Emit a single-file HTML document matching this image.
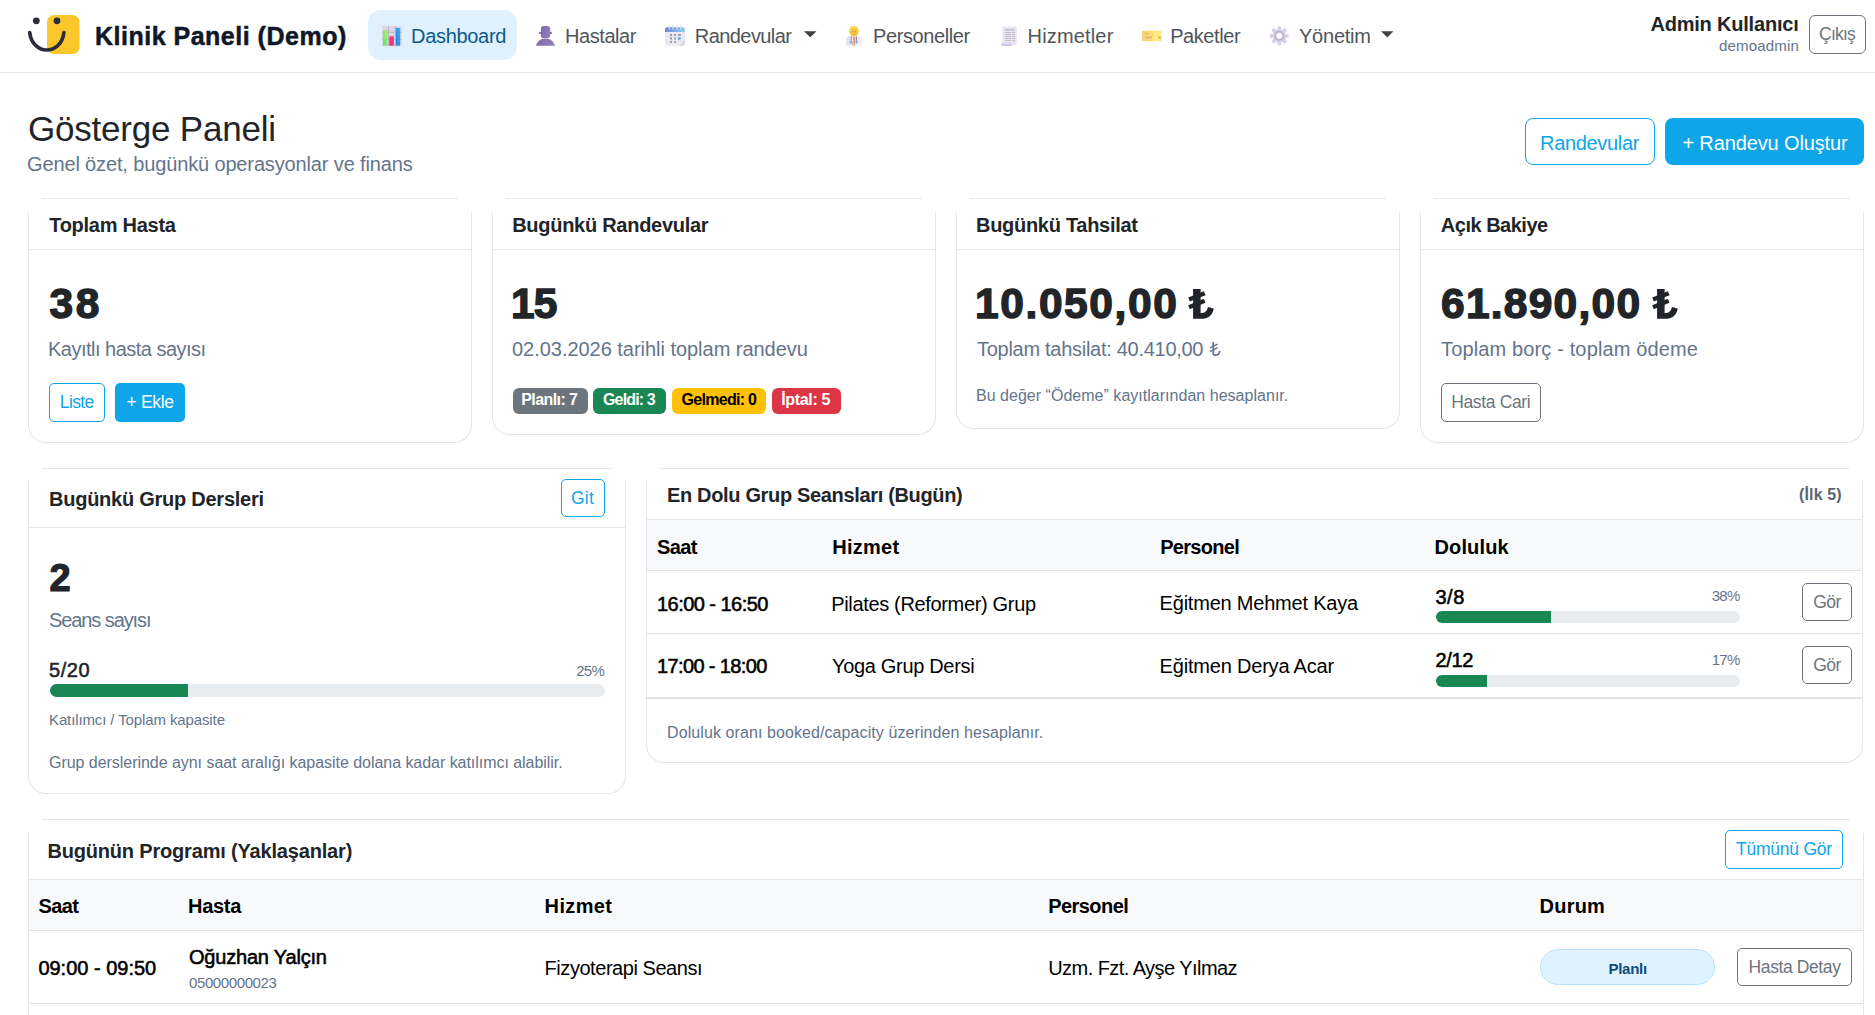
<!DOCTYPE html>
<html><head><meta charset="utf-8"><title>Klinik Paneli</title>
<style>
html,body{margin:0;padding:0;background:#fff;width:1875px;height:1015px;overflow:hidden;position:relative}
body{font-family:"Liberation Sans",sans-serif}
.t{position:absolute;white-space:nowrap;line-height:1}
.b{position:absolute;display:block}
</style></head><body>
<div class="b" style="left:0.0px;top:72.0px;width:1875.0px;height:1.0px;background:#e5e7eb"></div>
<svg class="b" style="left:26px;top:14px" width="56" height="42" viewBox="26 14 56 42"><rect x="47" y="15" width="32.5" height="39" rx="7" fill="#fbc72a"/><circle cx="36.3" cy="20.8" r="3.4" fill="#2e2b3f"/><circle cx="57" cy="20.8" r="3.4" fill="#2e2b3f"/><path d="M29.7 32.5 C31 45 40 50 46.5 50 C54 50 62.5 45 63.9 32.5" fill="none" stroke="#2e2b3f" stroke-width="3.6" stroke-linecap="round"/></svg>
<span id="t0" class="t" style="left:95.0px;top:23.63px;font-size:25px;font-weight:700;color:#0f172a;letter-spacing:0.501px;-webkit-text-stroke:0.5px #0f172a">Klinik Paneli (Demo)</span>
<div class="b" style="left:368.0px;top:10.0px;width:149.0px;height:50.0px;background:#e0f1fd;border-radius:13px"></div>
<span id="t1" class="t" style="left:411.0px;top:25.87px;font-size:20px;font-weight:400;color:#0b5a8b;letter-spacing:-0.306px">Dashboard</span>
<span id="t2" class="t" style="left:565.0px;top:25.87px;font-size:20px;font-weight:400;color:#505559;letter-spacing:-0.429px">Hastalar</span>
<span id="t3" class="t" style="left:694.8px;top:25.87px;font-size:20px;font-weight:400;color:#505559;letter-spacing:-0.570px">Randevular</span>
<span id="t4" class="t" style="left:873.0px;top:25.87px;font-size:20px;font-weight:400;color:#505559;letter-spacing:-0.390px">Personeller</span>
<span id="t5" class="t" style="left:1027.6px;top:25.87px;font-size:20px;font-weight:400;color:#505559;letter-spacing:0.156px">Hizmetler</span>
<span id="t6" class="t" style="left:1170.2px;top:25.87px;font-size:20px;font-weight:400;color:#505559;letter-spacing:-0.429px">Paketler</span>
<span id="t7" class="t" style="left:1299.0px;top:25.87px;font-size:20px;font-weight:400;color:#505559;letter-spacing:-0.233px">Yönetim</span>
<svg class="b" style="left:804px;top:30.5px" width="12.5" height="6.5" viewBox="0 0 12 6"><path d="M0 0 H12 L6 6 Z" fill="#3f4347"/></svg>
<svg class="b" style="left:1380.6px;top:30.5px" width="12.5" height="6.5" viewBox="0 0 12 6"><path d="M0 0 H12 L6 6 Z" fill="#3f4347"/></svg>
<svg class="b" style="left:378px;top:22px" width="28" height="28" viewBox="0 0 28 28"><defs><linearGradient id="gG" x1="0" y1="1" x2="1" y2="0"><stop offset="0" stop-color="#5fdc86"/><stop offset="1" stop-color="#b9f25c"/></linearGradient><linearGradient id="gP" x1="0" y1="1" x2="1" y2="0"><stop offset="0" stop-color="#e1305f"/><stop offset="1" stop-color="#f0449a"/></linearGradient><linearGradient id="gB" x1="0" y1="1" x2="1" y2="0"><stop offset="0" stop-color="#2f7fd8"/><stop offset="1" stop-color="#38b2f8"/></linearGradient></defs><rect x="4.1" y="3.9" width="19.6" height="20.4" rx="1.2" fill="#dcd6e6"/><path d="M10.4 3.9 V24.3 M17.4 3.9 V24.3 M4.1 10.3 H23.7 M4.1 17.4 H23.7" stroke="#a9a2b5" stroke-width="0.7"/><rect x="4.9" y="8.3" width="4.6" height="15.4" fill="url(#gG)"/><rect x="11.3" y="14.3" width="4.6" height="9.4" fill="url(#gP)"/><rect x="17.9" y="5.9" width="4.3" height="17.8" fill="url(#gB)"/></svg>
<svg class="b" style="left:532px;top:22px" width="28" height="28" viewBox="0 0 28 28"><defs><linearGradient id="gU" x1="0" y1="0" x2="1" y2="0"><stop offset="0" stop-color="#7f6aa6"/><stop offset="1" stop-color="#9780bf"/></linearGradient></defs><circle cx="8.3" cy="10.9" r="1.2" fill="#7a64a0"/><circle cx="18.7" cy="10.9" r="1.2" fill="#7a64a0"/><rect x="8.9" y="4.1" width="9.3" height="11.9" rx="2.6" fill="url(#gU)"/><path d="M4.1 23.7 C5.3 19.3 8.6 16.6 13.5 16.6 C18.4 16.6 21.7 19.3 22.9 23.7 Z" fill="url(#gU)"/></svg>
<svg class="b" style="left:662px;top:22px" width="28" height="28" viewBox="0 0 28 28"><defs><linearGradient id="gC" x1="0" y1="0" x2="1" y2="0"><stop offset="0" stop-color="#6a86d6"/><stop offset="1" stop-color="#8fd0f2"/></linearGradient></defs><rect x="3" y="5.2" width="20" height="18.5" rx="2.4" fill="#ece8f3"/><path d="M3 9.9 V7.4 C3 6.1 4.1 5.2 5.4 5.2 H20.6 C21.9 5.2 23 6.1 23 7.4 V9.9 Z" fill="url(#gC)"/><path d="M7.3 3.2 V7.3 M11 3.2 V7.3 M14.8 3.2 V7.3 M18.6 3.2 V7.3" stroke="#dcdce6" stroke-width="1.1" stroke-linecap="round"/><g fill="#a19ca8"><rect x="8" y="12" width="2" height="2"/><rect x="12" y="12" width="2" height="2"/><rect x="16" y="12" width="2.8" height="2"/><rect x="8" y="15.3" width="2" height="2.3"/><rect x="12" y="15.3" width="2" height="2.3"/><rect x="8" y="19" width="2" height="1.8"/><rect x="12" y="19" width="2" height="1.8"/></g><path d="M16 15.2 H18.8 V16.6 C18.8 17.4 18 17.9 16.9 17.9 H16 Z" fill="#6fa9e8"/><path d="M17 23.7 L23 17 V21.5 C23 22.7 22 23.7 20.8 23.7 Z" fill="#ddd8e6"/></svg>
<svg class="b" style="left:840px;top:22px" width="28" height="28" viewBox="0 0 28 28"><defs><linearGradient id="gD" x1="0" y1="0" x2="1" y2="0"><stop offset="0" stop-color="#e3dfed"/><stop offset="1" stop-color="#f1eef7"/></linearGradient></defs><path d="M6.3 23.7 V18 C6.3 15.5 8.5 14.1 11 14.1 H17.4 C19.9 14.1 22.1 15.5 22.1 18 V23.7 Z" fill="url(#gD)"/><path d="M11.3 14.3 V18.5 C11.3 20.7 12.7 21 12.7 21 M10.3 19 C9.6 21.3 11.5 22 12.5 21.2" fill="none" stroke="#7683b8" stroke-width="0.9"/><path d="M16.5 14.3 V19.5" stroke="#7683b8" stroke-width="0.9"/><circle cx="16.5" cy="20.3" r="1.1" fill="#5fa8ec"/><path d="M13.3 15 H15.2 L14.8 23.7 H13.7 Z" fill="#e8874f"/><ellipse cx="14" cy="9" rx="4.9" ry="5.3" fill="#f8dc55"/><ellipse cx="14" cy="10.2" rx="3.7" ry="4" fill="#f6c443"/><circle cx="12.4" cy="9.7" r="0.55" fill="#6d6a73"/><circle cx="15.6" cy="9.7" r="0.55" fill="#6d6a73"/><rect x="13.2" y="11.8" width="1.6" height="0.8" rx="0.4" fill="#d7745f"/></svg>
<svg class="b" style="left:995px;top:22px" width="28" height="28" viewBox="0 0 28 28"><path d="M7.4 5 L8.3 4.3 L9.2 5 L10.1 4.3 L11 5 L11.9 4.3 L12.8 5 L13.7 4.3 L14.6 5 L15.5 4.3 L16.4 5 L17.3 4.3 L18.2 5 L19.1 4.3 L20 5 L20.9 4.3 L21.8 5 V21.5 C21.8 22.4 21.1 23 20.3 23 H7.4 Z" fill="#e9e4ef"/><rect x="10.1" y="7.1" width="9.5" height="1.5" fill="#c3bec9"/><g fill="#bdb8c4"><rect x="10.1" y="10" width="5.8" height="0.9"/><rect x="17.1" y="10" width="2.7" height="0.9"/><rect x="10.1" y="12" width="5.8" height="0.9"/><rect x="17.1" y="12" width="2.7" height="0.9"/><rect x="10.1" y="14" width="5.8" height="0.9"/><rect x="17.1" y="14" width="2.7" height="0.9"/><rect x="10.1" y="16.1" width="5.8" height="0.9"/><rect x="17.1" y="16.1" width="2.7" height="0.9"/><rect x="10.1" y="18.1" width="5.8" height="0.9"/><rect x="17.1" y="18.1" width="2.7" height="0.9"/></g><rect x="6" y="20.7" width="10.8" height="3" rx="1.2" fill="#ddd3ea"/><rect x="7" y="22.8" width="9.8" height="0.9" fill="#c9b5e2"/></svg>
<svg class="b" style="left:1138px;top:22px" width="28" height="28" viewBox="0 0 28 28"><defs><linearGradient id="gT" x1="0" y1="0" x2="1" y2="0"><stop offset="0" stop-color="#f4d26c"/><stop offset="1" stop-color="#fff27c"/></linearGradient></defs><path d="M4.1 8.8 H16.8 C16.8 9.4 17.1 9.7 17.4 9.7 C17.7 9.7 18 9.4 18 8.8 H24 V19 H18 C18 18.4 17.7 18.1 17.4 18.1 C17.1 18.1 16.8 18.4 16.8 19 H4.1 Z" fill="url(#gT)"/><circle cx="17.4" cy="12.1" r="0.8" fill="#fff"/><circle cx="17.4" cy="15.5" r="0.8" fill="#fff"/><rect x="7.2" y="11.1" width="3.6" height="0.9" fill="#e39f6e"/><rect x="7.2" y="14.5" width="6.6" height="2.1" fill="#e6b27a"/><rect x="20.5" y="14.5" width="2.2" height="2.1" rx="0.6" fill="#e59a70"/></svg>
<svg class="b" style="left:1265px;top:22px" width="28" height="28" viewBox="0 0 28 28"><g fill="#d8d0e7"><circle cx="14.30" cy="6.20" r="2.1"/><circle cx="19.67" cy="8.43" r="2.1"/><circle cx="21.90" cy="13.80" r="2.1"/><circle cx="19.67" cy="19.17" r="2.1"/><circle cx="14.30" cy="21.40" r="2.1"/><circle cx="8.93" cy="19.17" r="2.1"/><circle cx="6.70" cy="13.80" r="2.1"/><circle cx="8.93" cy="8.43" r="2.1"/><circle cx="14.3" cy="13.8" r="6.6"/></g><circle cx="14.3" cy="13.8" r="4.2" fill="none" stroke="#bfb4d0" stroke-width="1.8"/><circle cx="14.3" cy="13.8" r="2.8" fill="#fff"/></svg>
<span id="t8" class="t" style="left:1650.4px;top:13.87px;font-size:20px;font-weight:700;color:#212529;letter-spacing:-0.198px">Admin Kullanıcı</span>
<span id="t9" class="t" style="left:1719.0px;top:37.90px;font-size:15px;font-weight:400;color:#64748b;letter-spacing:0.194px">demoadmin</span>
<div class="b" style="left:1809.0px;top:15.0px;width:57.0px;height:39.0px;border:1px solid #6c757d;border-radius:6px;box-sizing:border-box"></div>
<span id="t10" class="t" style="left:1819.0px;top:26.18px;font-size:17.5px;font-weight:400;color:#6c757d;letter-spacing:-0.750px">Çıkış</span>
<span id="t11" class="t" style="left:28.0px;top:111.37px;font-size:35px;font-weight:400;color:#212529;letter-spacing:-0.214px">Gösterge Paneli</span>
<span id="t12" class="t" style="left:27.0px;top:153.57px;font-size:20px;font-weight:400;color:#64748b;letter-spacing:-0.137px">Genel özet, bugünkü operasyonlar ve finans</span>
<div class="b" style="left:1525.0px;top:118.0px;width:130.0px;height:47.0px;border:1px solid #0ea5e9;border-radius:8px;box-sizing:border-box"></div>
<span id="t13" class="t" style="left:1540.0px;top:133.07px;font-size:20px;font-weight:400;color:#0ea5e9;letter-spacing:-0.316px">Randevular</span>
<div class="b" style="left:1665.0px;top:118.0px;width:199.0px;height:47.0px;background:#0ea5e9;border-radius:8px"></div>
<span id="t14" class="t" style="left:1682.4px;top:133.07px;font-size:20px;font-weight:400;color:#ffffff;letter-spacing:-0.129px">+ Randevu Oluştur</span>
<div class="b" style="left:42.0px;top:198.0px;width:416.0px;height:1.0px;background:#e3e6ea"></div>
<div class="b" style="left:28.0px;top:212.0px;width:444.0px;height:231.0px;border:1px solid #e3e6ea;border-top:none;border-radius:0 0 18px 18px;box-sizing:border-box"></div>
<div class="b" style="left:29.0px;top:249.0px;width:442.0px;height:1.0px;background:#e3e6ea"></div>
<div class="b" style="left:506.0px;top:198.0px;width:416.0px;height:1.0px;background:#e3e6ea"></div>
<div class="b" style="left:492.0px;top:212.0px;width:444.0px;height:223.0px;border:1px solid #e3e6ea;border-top:none;border-radius:0 0 18px 18px;box-sizing:border-box"></div>
<div class="b" style="left:493.0px;top:249.0px;width:442.0px;height:1.0px;background:#e3e6ea"></div>
<div class="b" style="left:970.0px;top:198.0px;width:416.0px;height:1.0px;background:#e3e6ea"></div>
<div class="b" style="left:956.0px;top:212.0px;width:444.0px;height:217.0px;border:1px solid #e3e6ea;border-top:none;border-radius:0 0 18px 18px;box-sizing:border-box"></div>
<div class="b" style="left:957.0px;top:249.0px;width:442.0px;height:1.0px;background:#e3e6ea"></div>
<div class="b" style="left:1434.0px;top:198.0px;width:416.0px;height:1.0px;background:#e3e6ea"></div>
<div class="b" style="left:1420.0px;top:212.0px;width:444.0px;height:231.0px;border:1px solid #e3e6ea;border-top:none;border-radius:0 0 18px 18px;box-sizing:border-box"></div>
<div class="b" style="left:1421.0px;top:249.0px;width:442.0px;height:1.0px;background:#e3e6ea"></div>
<span id="t15" class="t" style="left:49.2px;top:215.07px;font-size:20px;font-weight:700;color:#212529;letter-spacing:-0.260px">Toplam Hasta</span>
<span id="t16" class="t" style="left:512.2px;top:215.07px;font-size:20px;font-weight:700;color:#212529;letter-spacing:-0.277px">Bugünkü Randevular</span>
<span id="t17" class="t" style="left:976.0px;top:215.07px;font-size:20px;font-weight:700;color:#212529;letter-spacing:-0.290px">Bugünkü Tahsilat</span>
<span id="t18" class="t" style="left:1440.8px;top:215.07px;font-size:20px;font-weight:700;color:#212529;letter-spacing:-0.490px">Açık Bakiye</span>
<span id="t19" class="t" style="left:49.4px;top:283.02px;font-size:42.5px;font-weight:700;color:#212529;letter-spacing:2.800px;-webkit-text-stroke:1.4px #212529">38</span>
<span id="t20" class="t" style="left:511.0px;top:283.02px;font-size:42.5px;font-weight:700;color:#212529;letter-spacing:-0.900px;-webkit-text-stroke:1.4px #212529">15</span>
<span id="t21" class="t" style="left:975.0px;top:283.02px;font-size:42.5px;font-weight:700;color:#212529;letter-spacing:1.601px;-webkit-text-stroke:1.4px #212529">10.050,00</span>
<svg class="b" style="left:1189.2px;top:288.9px;overflow:visible" width="25.8" height="31.0" viewBox="0 0 60 72"><path d="M9.5 0 H27 V55.5 H31 C37.5 55.5 42.5 51 44 42 L57.5 45.5 C55 60 46 69 32 69 H9.5 Z" fill="#212529"/><path d="M0 24.4 L36.5 9.8 M0 42.3 L36.5 27.4" stroke="#212529" stroke-width="10"/></svg>
<span id="t22" class="t" style="left:1441.0px;top:283.02px;font-size:42.5px;font-weight:700;color:#212529;letter-spacing:1.250px;-webkit-text-stroke:1.4px #212529">61.890,00</span>
<svg class="b" style="left:1653.3px;top:288.9px;overflow:visible" width="25.8" height="31.0" viewBox="0 0 60 72"><path d="M9.5 0 H27 V55.5 H31 C37.5 55.5 42.5 51 44 42 L57.5 45.5 C55 60 46 69 32 69 H9.5 Z" fill="#212529"/><path d="M0 24.4 L36.5 9.8 M0 42.3 L36.5 27.4" stroke="#212529" stroke-width="10"/></svg>
<span id="t23" class="t" style="left:48.0px;top:338.57px;font-size:20px;font-weight:400;color:#64748b;letter-spacing:-0.510px">Kayıtlı hasta sayısı</span>
<span id="t24" class="t" style="left:512.0px;top:338.57px;font-size:20px;font-weight:400;color:#64748b;letter-spacing:-0.031px">02.03.2026 tarihli toplam randevu</span>
<span id="t25" class="t" style="left:977.0px;top:338.57px;font-size:20px;font-weight:400;color:#64748b;letter-spacing:-0.280px">Toplam tahsilat: 40.410,00</span>
<svg class="b" style="left:1209.7px;top:341.5px;overflow:visible" width="12.0" height="14.4" viewBox="0 0 60 72"><path d="M16.5 0 V58 C16.5 64 20 65.8 26 65.8 C40 65.8 47.5 59 48 45" fill="none" stroke="#64748b" stroke-width="8.5"/><path d="M0 30 L38 10.5 M0 48 L38 28.5" stroke="#64748b" stroke-width="7"/></svg>
<span id="t26" class="t" style="left:1441.0px;top:338.57px;font-size:20px;font-weight:400;color:#64748b;letter-spacing:0.140px">Toplam borç - toplam ödeme</span>
<div class="b" style="left:49.0px;top:383.0px;width:56.0px;height:39.0px;border:1px solid #0ea5e9;border-radius:5px;box-sizing:border-box"></div>
<span id="t27" class="t" style="left:59.8px;top:394.18px;font-size:17.5px;font-weight:400;color:#0ea5e9;letter-spacing:-0.625px">Liste</span>
<div class="b" style="left:115.0px;top:383.0px;width:70.0px;height:39.0px;background:#0ea5e9;border-radius:5px"></div>
<span id="t28" class="t" style="left:126.6px;top:394.18px;font-size:17.5px;font-weight:400;color:#ffffff;letter-spacing:-0.340px">+ Ekle</span>
<div class="b" style="left:512.8px;top:388.0px;width:74.8px;height:25.6px;background:#6c757d;border-radius:6px"></div>
<span id="t29" class="t" style="left:521.2px;top:392.35px;font-size:16px;font-weight:700;color:#fff;letter-spacing:-0.575px">Planlı: 7</span>
<div class="b" style="left:593.2px;top:388.0px;width:72.5px;height:25.6px;background:#198754;border-radius:6px"></div>
<span id="t30" class="t" style="left:603.0px;top:392.35px;font-size:16px;font-weight:700;color:#fff;letter-spacing:-0.844px">Geldi: 3</span>
<div class="b" style="left:672.0px;top:388.0px;width:94.4px;height:25.6px;background:#ffc107;border-radius:6px"></div>
<span id="t31" class="t" style="left:681.6px;top:392.35px;font-size:16px;font-weight:700;color:#000;letter-spacing:-0.713px">Gelmedi: 0</span>
<div class="b" style="left:772.0px;top:388.0px;width:68.7px;height:25.6px;background:#dc3545;border-radius:6px"></div>
<span id="t32" class="t" style="left:781.2px;top:392.35px;font-size:16px;font-weight:700;color:#fff;letter-spacing:-0.325px">İptal: 5</span>
<span id="t33" class="t" style="left:976.0px;top:388.45px;font-size:16px;font-weight:400;color:#64748b;letter-spacing:0.024px">Bu değer “Ödeme” kayıtlarından hesaplanır.</span>
<div class="b" style="left:1441.0px;top:383.4px;width:100.0px;height:38.6px;border:1px solid #6c757d;border-radius:5px;box-sizing:border-box"></div>
<span id="t34" class="t" style="left:1451.2px;top:394.18px;font-size:17.5px;font-weight:400;color:#6c757d;letter-spacing:-0.348px">Hasta Cari</span>
<div class="b" style="left:42.0px;top:468.0px;width:570.0px;height:1.0px;background:#e3e6ea"></div>
<div class="b" style="left:28.0px;top:482.0px;width:598.0px;height:312.0px;border:1px solid #e3e6ea;border-top:none;border-radius:0 0 18px 18px;box-sizing:border-box"></div>
<div class="b" style="left:29.0px;top:527.0px;width:596.0px;height:1.0px;background:#e3e6ea"></div>
<span id="t35" class="t" style="left:49.0px;top:489.07px;font-size:20px;font-weight:700;color:#212529;letter-spacing:-0.250px">Bugünkü Grup Dersleri</span>
<div class="b" style="left:561.0px;top:479.0px;width:44.0px;height:38.0px;border:1px solid #0ea5e9;border-radius:5px;box-sizing:border-box"></div>
<span id="t36" class="t" style="left:571.0px;top:490.38px;font-size:17.5px;font-weight:400;color:#0ea5e9;letter-spacing:0.250px">Git</span>
<span id="t37" class="t" style="left:49.5px;top:559.13px;font-size:38px;font-weight:700;color:#212529;letter-spacing:-4.900px;-webkit-text-stroke:1.2px #212529">2</span>
<span id="t38" class="t" style="left:49.0px;top:609.87px;font-size:20px;font-weight:400;color:#64748b;letter-spacing:-1.091px">Seans sayısı</span>
<span id="t39" class="t" style="left:49.0px;top:660.07px;font-size:20px;font-weight:400;color:#212529;letter-spacing:0.533px;-webkit-text-stroke:0.55px #212529">5/20</span>
<span id="t40" class="t" style="left:576.2px;top:662.70px;font-size:15px;font-weight:400;color:#64748b;letter-spacing:-0.700px">25%</span>
<div class="b" style="left:49.5px;top:684.0px;width:555.5px;height:13.0px;background:#e9ecef;border-radius:7px"></div>
<div class="b" style="left:49.5px;top:684.0px;width:138.7px;height:13.0px;background:#198754;border-radius:7px 0 0 7px"></div>
<span id="t41" class="t" style="left:49.0px;top:712.00px;font-size:15px;font-weight:400;color:#64748b;letter-spacing:-0.115px">Katılımcı / Toplam kapasite</span>
<span id="t42" class="t" style="left:49.0px;top:754.65px;font-size:16px;font-weight:400;color:#64748b;letter-spacing:-0.040px">Grup derslerinde aynı saat aralığı kapasite dolana kadar katılımcı alabilir.</span>
<div class="b" style="left:660.0px;top:468.0px;width:1189.0px;height:1.0px;background:#e3e6ea"></div>
<div class="b" style="left:646.0px;top:482.0px;width:1217.0px;height:281.0px;border:1px solid #e3e6ea;border-top:none;border-radius:0 0 18px 18px;box-sizing:border-box"></div>
<div class="b" style="left:647.0px;top:519.0px;width:1215.0px;height:1.0px;background:#e3e6ea"></div>
<span id="t43" class="t" style="left:667.0px;top:485.37px;font-size:20px;font-weight:700;color:#212529;letter-spacing:-0.338px">En Dolu Grup Seansları (Bugün)</span>
<span id="t44" class="t" style="left:1799.0px;top:486.75px;font-size:16px;font-weight:700;color:#5b6472;letter-spacing:0.149px">(İlk 5)</span>
<div class="b" style="left:647.0px;top:520.0px;width:1215.0px;height:50.0px;background:#f8f9fa"></div>
<div class="b" style="left:647.0px;top:570.0px;width:1215.0px;height:1.0px;background:#dee2e6"></div>
<span id="t45" class="t" style="left:657.0px;top:536.67px;font-size:20px;font-weight:700;color:#000;letter-spacing:-0.602px">Saat</span>
<span id="t46" class="t" style="left:832.2px;top:536.67px;font-size:20px;font-weight:700;color:#000;letter-spacing:0.280px">Hizmet</span>
<span id="t47" class="t" style="left:1160.2px;top:536.67px;font-size:20px;font-weight:700;color:#000;letter-spacing:-0.688px">Personel</span>
<span id="t48" class="t" style="left:1434.4px;top:536.67px;font-size:20px;font-weight:700;color:#000;letter-spacing:0.167px">Doluluk</span>
<div class="b" style="left:647.0px;top:633.0px;width:1215.0px;height:1.0px;background:#dee2e6"></div>
<div class="b" style="left:647.0px;top:697.0px;width:1215.0px;height:2.0px;background:#dee2e6"></div>
<span id="t49" class="t" style="left:657.0px;top:593.57px;font-size:20px;font-weight:400;color:#000;letter-spacing:-0.542px;-webkit-text-stroke:0.55px #000">16:00 - 16:50</span>
<span id="t50" class="t" style="left:831.2px;top:593.57px;font-size:20px;font-weight:400;color:#000;letter-spacing:-0.337px">Pilates (Reformer) Grup</span>
<span id="t51" class="t" style="left:1159.6px;top:592.97px;font-size:20px;font-weight:400;color:#000;letter-spacing:-0.212px">Eğitmen Mehmet Kaya</span>
<span id="t52" class="t" style="left:1435.4px;top:586.87px;font-size:20px;font-weight:400;color:#000;letter-spacing:0.550px;-webkit-text-stroke:0.55px #000">3/8</span>
<span id="t53" class="t" style="left:1711.8px;top:588.00px;font-size:15px;font-weight:400;color:#64748b;letter-spacing:-0.800px">38%</span>
<div class="b" style="left:1435.6px;top:611.2px;width:304.4px;height:11.5px;background:#e9ecef;border-radius:6px"></div>
<div class="b" style="left:1435.6px;top:611.2px;width:115.4px;height:11.5px;background:#198754;border-radius:6px 0 0 6px"></div>
<div class="b" style="left:1802.0px;top:583.0px;width:50.0px;height:38.0px;border:1px solid #6c757d;border-radius:5px;box-sizing:border-box"></div>
<span id="t54" class="t" style="left:1813.2px;top:593.58px;font-size:17.5px;font-weight:400;color:#6c757d;letter-spacing:-0.500px">Gör</span>
<span id="t55" class="t" style="left:657.0px;top:656.37px;font-size:20px;font-weight:400;color:#000;letter-spacing:-0.635px;-webkit-text-stroke:0.55px #000">17:00 - 18:00</span>
<span id="t56" class="t" style="left:832.0px;top:656.17px;font-size:20px;font-weight:400;color:#000;letter-spacing:-0.321px">Yoga Grup Dersi</span>
<span id="t57" class="t" style="left:1159.6px;top:655.87px;font-size:20px;font-weight:400;color:#000;letter-spacing:-0.195px">Eğitmen Derya Acar</span>
<span id="t58" class="t" style="left:1435.4px;top:649.77px;font-size:20px;font-weight:400;color:#000;letter-spacing:-0.333px;-webkit-text-stroke:0.55px #000">2/12</span>
<span id="t59" class="t" style="left:1711.8px;top:652.10px;font-size:15px;font-weight:400;color:#64748b;letter-spacing:-0.800px">17%</span>
<div class="b" style="left:1435.6px;top:674.5px;width:304.4px;height:12.0px;background:#e9ecef;border-radius:6px"></div>
<div class="b" style="left:1435.6px;top:674.5px;width:51.5px;height:12.0px;background:#198754;border-radius:6px 0 0 6px"></div>
<div class="b" style="left:1802.0px;top:646.0px;width:50.0px;height:38.0px;border:1px solid #6c757d;border-radius:5px;box-sizing:border-box"></div>
<span id="t60" class="t" style="left:1813.2px;top:656.98px;font-size:17.5px;font-weight:400;color:#6c757d;letter-spacing:-0.500px">Gör</span>
<span id="t61" class="t" style="left:667.0px;top:725.25px;font-size:16px;font-weight:400;color:#64748b;letter-spacing:0.088px">Doluluk oranı booked/capacity üzerinden hesaplanır.</span>
<div class="b" style="left:42.0px;top:819.0px;width:1808.0px;height:1.0px;background:#e3e6ea"></div>
<div class="b" style="left:28.0px;top:833.0px;width:1836.0px;height:267.0px;border:1px solid #e3e6ea;border-top:none;border-radius:0 0 18px 18px;box-sizing:border-box"></div>
<div class="b" style="left:29.0px;top:879.0px;width:1834.0px;height:1.0px;background:#e3e6ea"></div>
<span id="t62" class="t" style="left:47.4px;top:840.67px;font-size:20px;font-weight:700;color:#212529;letter-spacing:-0.178px">Bugünün Programı (Yaklaşanlar)</span>
<div class="b" style="left:1725.3px;top:830.3px;width:117.4px;height:38.4px;border:1px solid #0ea5e9;border-radius:5px;box-sizing:border-box"></div>
<span id="t63" class="t" style="left:1736.0px;top:840.78px;font-size:17.5px;font-weight:400;color:#0ea5e9;letter-spacing:-0.237px">Tümünü Gör</span>
<div class="b" style="left:29.0px;top:880.0px;width:1834.0px;height:50.0px;background:#f8f9fa"></div>
<div class="b" style="left:29.0px;top:930.0px;width:1834.0px;height:1.0px;background:#dee2e6"></div>
<span id="t64" class="t" style="left:38.4px;top:895.77px;font-size:20px;font-weight:700;color:#000;letter-spacing:-0.568px">Saat</span>
<span id="t65" class="t" style="left:188.0px;top:895.77px;font-size:20px;font-weight:700;color:#000;letter-spacing:-0.300px">Hasta</span>
<span id="t66" class="t" style="left:544.6px;top:895.77px;font-size:20px;font-weight:700;color:#000;letter-spacing:0.360px">Hizmet</span>
<span id="t67" class="t" style="left:1048.2px;top:895.77px;font-size:20px;font-weight:700;color:#000;letter-spacing:-0.558px">Personel</span>
<span id="t68" class="t" style="left:1539.6px;top:895.77px;font-size:20px;font-weight:700;color:#000;letter-spacing:0.200px">Durum</span>
<span id="t69" class="t" style="left:38.4px;top:958.47px;font-size:20px;font-weight:400;color:#000;letter-spacing:-0.008px;-webkit-text-stroke:0.55px #000">09:00 - 09:50</span>
<span id="t70" class="t" style="left:189.0px;top:946.97px;font-size:20px;font-weight:400;color:#000;letter-spacing:-0.196px;-webkit-text-stroke:0.55px #000">Oğuzhan Yalçın</span>
<span id="t71" class="t" style="left:189.0px;top:975.30px;font-size:15px;font-weight:400;color:#64748b;letter-spacing:-0.390px">05000000023</span>
<span id="t72" class="t" style="left:544.6px;top:958.47px;font-size:20px;font-weight:400;color:#000;letter-spacing:-0.454px">Fizyoterapi Seansı</span>
<span id="t73" class="t" style="left:1048.2px;top:958.47px;font-size:20px;font-weight:400;color:#000;letter-spacing:-0.550px">Uzm. Fzt. Ayşe Yılmaz</span>
<div class="b" style="left:1540.3px;top:949.2px;width:174.5px;height:35.6px;background:#e0f2fe;border:1px solid #b7e2fb;border-radius:18px;box-sizing:border-box"></div>
<span id="t74" class="t" style="left:1608.4px;top:960.50px;font-size:15px;font-weight:700;color:#0b4f7c;letter-spacing:-0.260px">Planlı</span>
<div class="b" style="left:1737.3px;top:948.4px;width:115.1px;height:37.3px;border:1px solid #6c757d;border-radius:5px;box-sizing:border-box"></div>
<span id="t75" class="t" style="left:1748.6px;top:959.28px;font-size:17.5px;font-weight:400;color:#6c757d;letter-spacing:-0.400px">Hasta Detay</span>
<div class="b" style="left:29.0px;top:1003.0px;width:1834.0px;height:1.0px;background:#dee2e6"></div>
</body></html>
